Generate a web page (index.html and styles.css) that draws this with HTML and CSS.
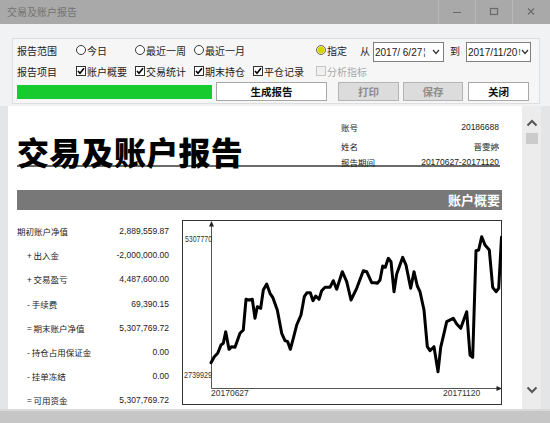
FILE: index.html
```html
<!DOCTYPE html>
<html lang="zh-CN">
<head>
<meta charset="utf-8">
<title>交易及账户报告</title>
<link rel="stylesheet" href="styles.css">
</head>
<body>
<div class="window">
  <div class="titlebar">
    <span class="title">交易及账户报告</span>
    <div class="wbtns">
      <span class="wbtn"><svg width="10" height="10" viewBox="0 0 10 10"><line x1="1" y1="6.5" x2="9" y2="6.5" stroke="#6a6a6a" stroke-width="1"/></svg></span>
      <span class="wbtn"><svg width="10" height="10" viewBox="0 0 10 10"><rect x="1.5" y="2.5" width="7" height="6" fill="none" stroke="#6a6a6a" stroke-width="1.2"/></svg></span>
      <span class="wbtn"><svg width="10" height="10" viewBox="0 0 10 10"><path d="M2 2.5 L8 8.5 M8 2.5 L2 8.5" stroke="#6a6a6a" stroke-width="1.1"/></svg></span>
    </div>
  </div>

  <div class="controls">
    <div class="group">
      <div class="row r1">
        <span class="lbl">报告范围</span>
        <label class="opt"><span class="radio"></span>今日</label>
        <label class="opt"><span class="radio"></span>最近一周</label>
        <label class="opt"><span class="radio"></span>最近一月</label>
        <label class="opt spec"><span class="radio on"></span>指定</label>
        <span class="from">从</span>
        <div class="date d1"><span class="dtext">2017/ 6/27</span><span class="mark">¦</span><svg class="chev" width="8" height="6" viewBox="0 0 8 6"><path d="M1 1 L4 4.5 L7 1" fill="none" stroke="#333" stroke-width="1.2"/></svg></div>
        <span class="to">到</span>
        <div class="date d2"><span class="dtext">2017/11/20</span><span class="mark">!</span><svg class="chev" width="8" height="6" viewBox="0 0 8 6"><path d="M1 1 L4 4.5 L7 1" fill="none" stroke="#333" stroke-width="1.2"/></svg></div>
      </div>
      <div class="row r2">
        <span class="lbl">报告项目</span>
        <label class="opt"><svg class="cb" width="10" height="10" viewBox="0 0 10 10"><rect x="0.5" y="0.5" width="9" height="9" fill="#fff" stroke="#333"/><path d="M2 5 L4 7.3 L8 2.3" fill="none" stroke="#000" stroke-width="1.6"/></svg>账户概要</label>
        <label class="opt"><svg class="cb" width="10" height="10" viewBox="0 0 10 10"><rect x="0.5" y="0.5" width="9" height="9" fill="#fff" stroke="#333"/><path d="M2 5 L4 7.3 L8 2.3" fill="none" stroke="#000" stroke-width="1.6"/></svg>交易统计</label>
        <label class="opt"><svg class="cb" width="10" height="10" viewBox="0 0 10 10"><rect x="0.5" y="0.5" width="9" height="9" fill="#fff" stroke="#333"/><path d="M2 5 L4 7.3 L8 2.3" fill="none" stroke="#000" stroke-width="1.6"/></svg>期末持仓</label>
        <label class="opt wide"><svg class="cb" width="10" height="10" viewBox="0 0 10 10"><rect x="0.5" y="0.5" width="9" height="9" fill="#fff" stroke="#333"/><path d="M2 5 L4 7.3 L8 2.3" fill="none" stroke="#000" stroke-width="1.6"/></svg>平仓记录</label>
        <label class="opt dis"><svg class="cb" width="10" height="10" viewBox="0 0 10 10"><rect x="0.5" y="0.5" width="9" height="9" fill="#f0f0f0" stroke="#c4c4c4"/></svg>分析指标</label>
      </div>
      <div class="row r3">
        <div class="progress"></div>
        <button class="btn gen">生成报告</button>
        <button class="btn off print">打印</button>
        <button class="btn off save">保存</button>
        <button class="btn close">关闭</button>
      </div>
    </div>
  </div>

  <div class="page">
    <div class="report">
      <div class="header">
        <h1 class="bigtitle">交易及账户报告</h1>
        <div class="info">
          <div class="irow i1"><span>账号</span><span class="num">20186688</span></div>
          <div class="irow i2"><span>姓名</span><span>晋雯婷</span></div>
          <div class="irow i3"><span>报告期间</span><span class="num">20170627-20171120</span></div>
        </div>
      </div>
      <div class="section">账户概要</div>
      <div class="summary">
        <div class="table">
          <div class="trow"><span>期初账户净值</span><span class="num">2,889,559.87</span></div>
          <div class="trow ind"><span>+ 出入金</span><span class="num">-2,000,000.00</span></div>
          <div class="trow ind"><span>+ 交易盈亏</span><span class="num">4,487,600.00</span></div>
          <div class="trow ind"><span>- 手续费</span><span class="num">69,390.15</span></div>
          <div class="trow ind"><span>= 期末账户净值</span><span class="num">5,307,769.72</span></div>
          <div class="trow ind"><span>- 持仓占用保证金</span><span class="num">0.00</span></div>
          <div class="trow ind"><span>- 挂单冻结</span><span class="num">0.00</span></div>
          <div class="trow ind"><span>= 可用资金</span><span class="num">5,307,769.72</span></div>
        </div>
        <div class="chart">
          <svg width="320" height="185" viewBox="182 220 320 185">
            <rect x="182.5" y="220.5" width="319" height="184" fill="#fff" stroke="#333" stroke-width="1"/>
            <line x1="211.5" y1="224" x2="211.5" y2="388.5" stroke="#555" stroke-width="1"/>
            <line x1="211.5" y1="388.5" x2="498" y2="388.5" stroke="#555" stroke-width="1"/>
            <path d="M211.5 221 L209 226.5 L214 226.5 Z" fill="#222"/>
            <path d="M502 388.5 L496.5 386 L496.5 391 Z" fill="#222"/>
            <text x="185" y="242" class="ax" textLength="27" lengthAdjust="spacingAndGlyphs">5307770</text>
            <text x="184" y="378" class="ax" textLength="28" lengthAdjust="spacingAndGlyphs">2739929</text>
            <text x="211" y="396" class="ax">20170627</text>
            <text x="443" y="396" class="ax">20171120</text>
            <polyline fill="none" stroke="#000" stroke-width="3" stroke-linejoin="round" stroke-linecap="round"
              points="211,362.7 214.3,356.7 217.7,353.3 221,345 223.3,343.3 225.7,331.7 229,349.3 231.7,346.7 235,347.3 240,333.3 243.3,330 246,299.3 249,300 252.3,299.3 255,318.3 257.3,306.7 260.7,308.3 263.3,290 266.7,284 270,293.3 272.7,297.3 277.3,310 281.7,333.3 285,340.7 287.7,341.7 290.3,349.3 293.3,338.3 296.7,325 301,315 304.3,296.7 307,292.7 310.3,292.7 313,300.7 315.7,296 319,299.3 321.7,290.7 325,287.3 330,287.3 333.3,280.7 336.7,289.3 342.3,271.7 346.7,281.7 351,300 356.7,288.3 363.3,270.7 366.7,271.7 371.7,282.7 375,282.7 377.3,283.3 380,280 382.7,266 385.3,267.3 388.3,258.3 391,261.7 394,291.7 396.7,274 402.7,257.3 406,265 410.7,288.3 414,271.7 417.3,286 420,291.7 424,310 427.3,346.7 430,350.7 434,346.7 438,371.7 440.7,347.3 444,333.3 446.7,321.7 453.3,318.3 456.7,324 460.7,328.3 466.7,311.7 470,355 472.7,357.3 476,250.7 478.7,250 481.7,236.7 485,245 489.3,250 492.7,287.3 496,291.7 498.7,288.3 501.5,237.3"/>
          </svg>
        </div>
      </div>
    </div>
    <div class="scrollbar">
      <svg class="sup" width="12" height="8" viewBox="0 0 12 8"><path d="M1.5 6.5 L6 2 L10.5 6.5" fill="none" stroke="#555" stroke-width="2"/></svg>
      <div class="thumb"></div>
      <svg class="sdown" width="12" height="8" viewBox="0 0 12 8"><path d="M1.5 1.5 L6 6 L10.5 1.5" fill="none" stroke="#555" stroke-width="2"/></svg>
    </div>
  </div>
  <div class="bottom"></div>
</div>
</body>
</html>
```

FILE: styles.css
```css
* { box-sizing: border-box; }
body {
  margin: 0;
  font-family: "Noto Sans CJK SC", "Liberation Sans", sans-serif;
  color: #1a1a1a;
}
.window {
  width: 550px;
  height: 423px;
  background: #f1f2f4;
  display: flex;
  flex-direction: column;
  overflow: hidden;
}

/* title bar */
.titlebar {
  height: 24px;
  flex: none;
  background: #a9a9a9;
  display: flex;
  align-items: stretch;
}
.title {
  padding-left: 7px;
  font-size: 10px;
  line-height: 24px;
  color: #737373;
  flex: 1;
}
.wbtns {
  display: flex;
  margin-right: 1px;
}
.wbtn {
  width: 37px;
  border-left: 1px solid #b8b8b8;
  display: flex;
  align-items: center;
  justify-content: center;
  padding-bottom: 2px;
}

/* controls */
.controls {
  flex: none;
  padding: 14px 10px 2px 12px;
}
.group {
  border: 1px solid #dcdee2;
  padding: 0 4px 2px 4px;
  background: #f6f6f7;
}
.row {
  display: flex;
  align-items: center;
  font-size: 10px;
  white-space: nowrap;
}
.r1 { height: 22px; }
.r2 { height: 20px; }
.r3 { height: 19px; margin-top: 1px; }
.lbl { width: 59px; flex: none; }
.opt {
  width: 59px;
  flex: none;
  display: flex;
  align-items: center;
}
.opt.spec { margin-left: 63px; width: 44px; }
.opt.wide { width: 63px; }
.opt.dis { color: #a9a9a9; }
.radio {
  width: 10px;
  height: 10px;
  border: 1px solid #3a3a3a;
  border-radius: 50%;
  background: #fff;
  margin-right: 1px;
  flex: none;
}
.radio.on {
  border-color: #666;
  background: radial-gradient(circle, #d8d400 0 3px, #f4ef7a 3.6px, #fff 4.4px);
}
.cb { flex: none; margin-right: 1px; }
.from { width: 13px; flex: none; }
.to { width: 16px; margin-left: 6px; flex: none; }
.date {
  align-self: flex-end;
  margin-bottom: -1px;
  height: 20px;
  border: 1px solid #7f7f7f;
  background: #fff;
  display: flex;
  align-items: center;
  font-family: "Liberation Sans", sans-serif;
  font-size: 10px;
  padding-left: 1px;
  flex: none;
}
.d1 { width: 71px; }
.d2 { width: 65px; }
.dtext { flex: none; }
.mark {
  font-size: 9px;
  margin-left: 1px;
  color: #333;
  flex: none;
}
.chev { margin-left: auto; margin-right: 3px; flex: none; }

.progress {
  width: 195px;
  height: 14px;
  background: #17cb2f;
  flex: none;
}
.btn {
  height: 19px;
  padding: 0;
  border: 1px solid #a8a8a8;
  background: #fff;
  font-family: "Noto Sans CJK SC", sans-serif;
  font-size: 10.5px;
  font-weight: bold;
  color: #111;
  flex: none;
  line-height: 17px;
}
.btn.off { background: #dcdcdc; color: #8d8d8d; border-color: #b4b4b4; }
.gen { width: 111px; margin-left: 4px; }
.print { width: 61px; margin-left: 11px; }
.save { width: 60px; margin-left: 4px; }
.close { width: 61px; margin-left: 5px; }

/* page area */
.page {
  flex: none;
  height: 303px;
  display: flex;
  padding-left: 8px;
  padding-right: 9px;
  background: #e4e5e7;
}
.report {
  width: 514px;
  flex: none;
  background: #fff;
  overflow: hidden;
  padding: 16px 0 0 9px;
}
.header {
  width: 483px;
  display: flex;
  justify-content: space-between;
  align-items: flex-end;
  border-bottom: 2px solid #6a6a6a;
}
.bigtitle {
  margin: 0 0 -2px 0;
  font-size: 32px;
  line-height: 31px;
  font-weight: 900;
  color: #000;
  letter-spacing: 0.3px;
}
.info {
  width: 158px;
  margin-right: 1px;
  font-size: 8.5px;
  color: #222;
}
.irow {
  display: flex;
  justify-content: space-between;
  line-height: 10px;
}
.i2 { margin-top: 9px; }
.i3 { margin-top: 6px; margin-bottom: -2px; }
.num { font-family: "Liberation Sans", sans-serif; }

.section {
  width: 485px;
  margin-top: 23px;
  height: 20px;
  background: #787878;
  color: #fff;
  font-size: 13px;
  font-weight: bold;
  line-height: 20px;
  text-align: right;
  padding-right: 2px;
}
.summary {
  display: flex;
  margin-top: 10px;
}
.table {
  width: 152px;
  flex: none;
  margin-top: -1px;
  font-size: 8.5px;
  color: #222;
}
.trow {
  height: 24.2px;
  display: flex;
  justify-content: space-between;
  align-items: center;
}
.trow.ind { padding-left: 10px; }
.chart {
  margin-left: 13px;
  width: 320px;
  height: 185px;
  flex: none;
}
.chart svg { display: block; }
.ax {
  font-family: "Liberation Sans", sans-serif;
  font-size: 8.5px;
  fill: #333;
}

/* scrollbar */
.scrollbar {
  width: 19px;
  flex: none;
  background: #ececec;
  display: flex;
  flex-direction: column;
  align-items: center;
}
.sup { margin-top: 13px; }
.thumb {
  margin-top: 6px;
  width: 12px;
  height: 11px;
  background: #cbcbcb;
}
.sdown { margin-top: auto; margin-bottom: 15px; }

.bottom {
  flex: 1;
  background: #c6c6c6;
  border-top: 2px solid #d8d9db;
}
```
